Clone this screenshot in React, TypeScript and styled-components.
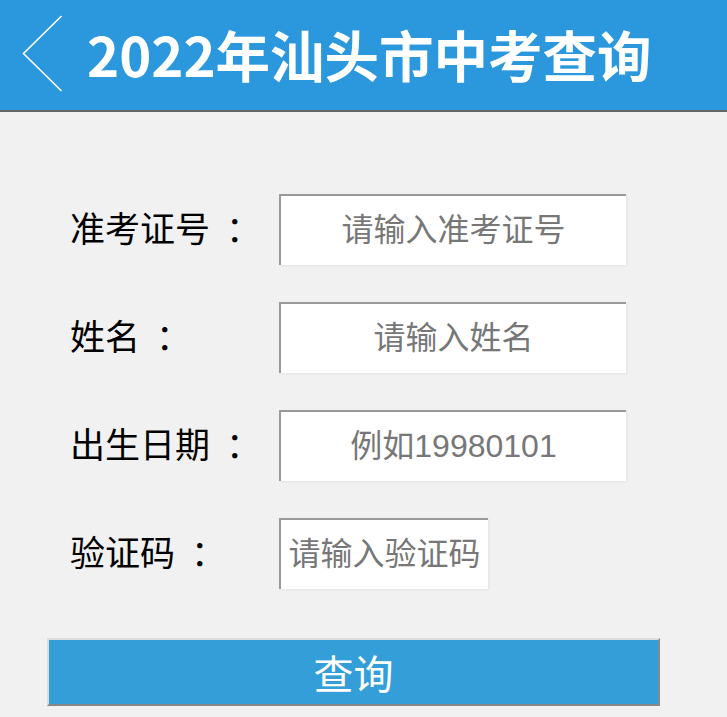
import React from "react";
import styled, { createGlobalStyle } from "styled-components";

const Global = createGlobalStyle`
  html, body { margin: 0; padding: 0; background: #f1f1f1; }
  body { font-family: "Noto Sans CJK SC", "Microsoft YaHei", sans-serif; }
  input::placeholder { color: #777; opacity: 1; }
`;

const Page = styled.div`
  width: 727px;
  height: 717px;
  background: #f1f1f1;
  overflow: hidden;
`;

const Header = styled.header`
  height: 110px;
  background: #2b98dd;
  border-bottom: 2px solid #666;
  display: flex;
  align-items: center;
  padding-left: 22px;
  gap: 24px;
`;

const Back = styled.svg`
  width: 41px;
  height: 78px;
  flex: none;
  margin-top: -2px;
`;

const Title = styled.h1`
  margin: 0;
  color: #fff;
  font-family: "Noto Sans CJK SC", sans-serif;
  font-weight: 700;
  font-size: 54.5px;
  line-height: 1;
  margin-top: -1px;
`;

const Form = styled.form`
  display: flex;
  flex-direction: column;
  gap: 37px;
  padding: 82px 0 0 70px;
`;

const Row = styled.div`
  display: flex;
  align-items: center;
  height: 71px;
`;

const Label = styled.label`
  width: 209px;
  flex: none;
  font-size: 35px;
  color: #000;
  font-family: "Noto Sans CJK SC", sans-serif;
  margin-top: -6px;
  white-space: nowrap;
`;

const Colon = styled.span`
  margin-left: 16px;
`;

const Input = styled.input<{ $w: number }>`
  box-sizing: border-box;
  width: ${(p) => p.$w}px;
  height: 71px;
  background: #fff;
  border: none;
  border-top: 2px solid #999;
  border-left: 2px solid #999;
  box-shadow: 1px 1px 2px #e4e4e4;
  font-family: "Liberation Sans", "Noto Sans CJK SC", sans-serif;
  font-size: 32px;
  color: #333;
  text-align: center;
  padding: 0;
  outline: none;
  &::placeholder { text-align: center; }
`;

const Submit = styled.button`
  box-sizing: border-box;
  margin: 49px 0 0 47px;
  width: 613px;
  height: 68px;
  background: #349ed8;
  color: #fff;
  font-family: "Noto Sans CJK SC", sans-serif;
  font-size: 40px;
  border-style: solid;
  border-width: 2px;
  border-color: #ddd #888 #888 #ddd;
  padding: 0;
  line-height: 1;
`;

export default function App() {
  const rows = [
    { label: "准考证号", ph: "请输入准考证号", w: 347 },
    { label: "姓名", ph: "请输入姓名", w: 347 },
    { label: "出生日期", ph: "例如19980101", w: 347 },
    { label: "验证码", ph: "请输入验证码", w: 209 },
  ];
  return (
    <Page>
      <Global />
      <Header>
        <Back viewBox="0 0 41 78">
          <polyline points="39.5,1 1.5,38.5 39.5,76" fill="none" stroke="#fff" strokeWidth="1.6" />
        </Back>
        <Title>2022年汕头市中考查询</Title>
      </Header>
      <Form onSubmit={(e) => e.preventDefault()}>
        {rows.map((r) => (
          <Row key={r.label}>
            <Label>
              {r.label}
              <Colon>：</Colon>
            </Label>
            <Input $w={r.w} placeholder={r.ph} />
          </Row>
        ))}
      </Form>
      <Submit type="button">查询</Submit>
    </Page>
  );
}
